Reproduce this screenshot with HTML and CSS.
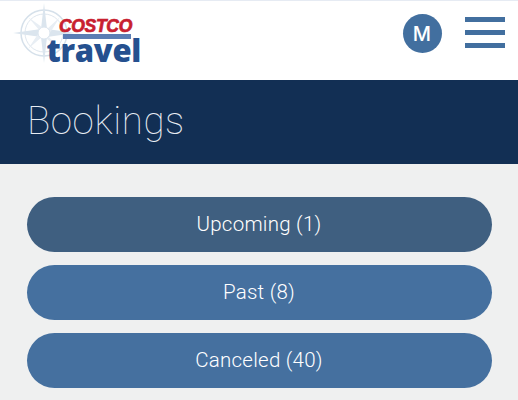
FILE: index.html
```
<!DOCTYPE html>
<html lang="en">
<head>
<meta charset="utf-8">
<title>Bookings</title>
<link rel="stylesheet" href="styles.css">
</head>
<body>
<header class="topbar">
  <div class="logo">
    <svg class="compass" width="62" height="60" viewBox="0 0 62 60" aria-hidden="true">
      <g fill="none" stroke="#d5e0ea">
        <circle cx="31" cy="30" r="23" stroke-width="1.5"/>
        <circle cx="31" cy="30" r="19" stroke-width=".8"/>
      </g>
      <path d="M31 0 L34 26 L62 30 L34 34 L31 60 L28 34 L0 30 L28 26 Z" fill="#dbe5ee"/>
      <path d="M15 14 L33 27 L47 14 L35 33 L47 46 L30 33 L15 46 L27 28 Z" fill="#e8eef4"/>
      <circle cx="31" cy="30" r="6" fill="#fff" stroke="#dbe5ee"/>
    </svg>
    <div class="brand">
      <span class="costco">COSTCO</span>
      <span class="rule"></span>
      <span class="travel">travel</span>
    </div>
  </div>
  <div class="actions">
    <span class="avatar">M</span>
    <span class="menu"><i></i><i></i><i></i></span>
  </div>
</header>
<section class="band"><h1>Bookings</h1></section>
<main class="list">
  <a class="pill pill-active">Upcoming (1)</a>
  <a class="pill">Past (8)</a>
  <a class="pill">Canceled (40)</a>
</main>
</body>
</html>
```
FILE: styles.css
```
* { box-sizing: border-box; }
html, body { margin: 0; height: 100%; overflow: hidden; }
body { background: #eff0f0; font-family: Roboto, sans-serif; color: #fff; }
.topbar {
  height: 80px;
  background: #fff;
  border-top: 1px solid #e6ebf3;
  display: flex;
  justify-content: space-between;
  align-items: flex-start;
  padding: 0 13px 0 13px;
}
.logo { width: 130px; height: 66px; margin-top: 2px; position: relative; }
.compass { display: block; }
.brand {
  position: absolute;
  left: 34px;
  top: 16px;
  width: 94px;
  display: flex;
  flex-direction: column;
  align-items: flex-end;
}
.costco {
  font: italic 700 17.5px/15px "Liberation Sans", sans-serif;
  color: #c8202f;
  -webkit-text-stroke: .7px #c8202f;
  letter-spacing: -.3px;
  margin-right: 9px;
}
.rule { width: 68px; height: 5px; margin: 0 10px 0 0; background: #5b7db4; }
.travel {
  font: 800 31px/23px "Open Sans", sans-serif;
  color: #25508f;
  letter-spacing: -.3px;
  height: 24px;
}
.actions { display: flex; align-items: flex-start; gap: 23px; padding-top: 13px; }
.avatar {
  width: 39px;
  height: 39px;
  border-radius: 50%;
  background: #426f9f;
  display: flex;
  align-items: center;
  justify-content: center;
  font: 500 20px "Inter", sans-serif;
  padding-right: 1px;
}
.menu { width: 40px; display: flex; flex-direction: column; gap: 8px; padding-top: 3px; }
.menu i { display: block; height: 5px; background: #426f9f; }
.band { height: 84px; background: #122f54; padding: 0 27px; }
.band h1 {
  margin: 0;
  font: 100 38.5px/81px Roboto, sans-serif;
  letter-spacing: .6px;
  color: #e8edf3;
}
.list { display: flex; flex-direction: column; gap: 13px; padding: 33px 26px 0 27px; }
.pill {
  height: 55px;
  border-radius: 28px;
  background: #45709f;
  display: flex;
  align-items: center;
  justify-content: center;
  padding: 0 1px 1px 0;
  font-size: 20.5px;
  font-weight: 300;
  letter-spacing: .25px;
}
.pill-active { background: #3f5f80; }
```
